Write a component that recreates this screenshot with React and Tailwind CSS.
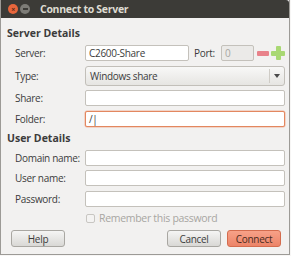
import React from 'react';

const Field = ({ label, className = '', children }) => (
  <div className={`flex items-center ${className}`}>
    <span className="w-[84px] pl-[14px] text-[#3c3c3c] shrink-0 whitespace-nowrap">{label}</span>
    {children}
  </div>
);

const Input = ({ value = '', focus, className = '' }) => (
  <div
    className={`h-[16px] rounded-[2px] border flex items-center px-[3px] ${
      focus ? 'border-[#e3875f] shadow-[0_0_0_0.5px_#f0b8a0]' : 'border-[#c4c1bb]'
    } ${className}`}
  >
    {value}
  </div>
);

const btn = 'w-[54px] h-[17px] rounded-[3px] border text-[10px] leading-none tracking-[-0.3px]';

export default function App() {
  return (
    <div
      className="w-[291px] h-[256px] bg-[#f7f6f5] text-[10px] leading-none tracking-[-0.3px]"
      style={{ fontFamily: '"Open Sans", "DejaVu Sans", sans-serif' }}
    >
      <div className="w-[290px] h-[255px] border border-[#9c9a96] border-t-0 flex flex-col bg-[#f2f1f0]">
        {/* title bar */}
        <div className="h-[18px] bg-[#3c3b37] flex items-center pl-[7px] shrink-0 rounded-tr-[3px]">
          <div className="w-[10px] h-[10px] rounded-full bg-[#e8663c] flex items-center justify-center text-[7px] text-[#5a2a18] font-bold">×</div>
          <div className="w-[10px] h-[10px] rounded-full bg-[#7d7c77] ml-[2px] flex items-center justify-center">
            <div className="w-[5px] h-[1.5px] bg-[#3c3b37]" />
          </div>
          <span className="ml-[10px] font-bold text-[#dfdbd2] text-[10.5px]">Connect to Server</span>
        </div>

        <div className="flex flex-col">
          <div className="font-bold text-[10.5px] tracking-normal text-[#3c3c3c] pl-[6px] mt-[9px] h-[12px] flex items-center">Server Details</div>

          <Field label="Server:" className="mt-[6px]">
            <Input value="C2600-Share" className="w-[104px] bg-white text-[#3c3c3c]" />
            <span className="ml-[5px] w-[27px] text-[#3c3c3c]">Port:</span>
            <Input value="0" className="w-[33px] bg-[#ebeae8] text-[#a8a6a2]" />
            <div className="ml-[3px] w-[12px] h-[5px] bg-[#e8828a] rounded-[1px]" />
            <div className="ml-[2px] w-[14px] h-[14px] relative">
              <div className="absolute left-[4.5px] top-0 w-[5px] h-[14px] bg-[#a9d873] rounded-[1px]" />
              <div className="absolute left-0 top-[4.5px] w-[14px] h-[5px] bg-[#a9d873] rounded-[1px]" />
            </div>
          </Field>
          <Field label="Type:" className="mt-[5px]">
            <div className="w-[200px] h-[20px] rounded-[3px] border border-[#c2bfb9] bg-gradient-to-b from-[#f8f8f7] to-[#e6e5e2] flex items-center">
              <span className="flex-1 pl-[4px] text-[#3c3c3c]">Windows share</span>
              <div className="w-[15px] h-[14px] border-l border-[#cfccc6] flex items-center justify-center">
                <svg width="6" height="4" viewBox="0 0 6 4"><path d="M0 0h6L3 4z" fill="#4a4a4a" /></svg>
              </div>
            </div>
          </Field>
          <Field label="Share:" className="mt-[4px]">
            <Input className="w-[200px] bg-white" />
          </Field>
          <Field label="Folder:" className="mt-[5px]">
            <Input value="/|" focus className="w-[200px] bg-white text-[#3c3c3c]" />
          </Field>

          <div className="font-bold text-[10.5px] tracking-normal text-[#3c3c3c] pl-[6px] mt-[5px] h-[12px] flex items-center">User Details</div>

          <Field label="Domain name:" className="mt-[6px]">
            <Input className="w-[200px] bg-white" />
          </Field>
          <Field label="User name:" className="mt-[4px]">
            <Input className="w-[200px] bg-white" />
          </Field>
          <Field label="Password:" className="mt-[5px]">
            <Input className="w-[200px] bg-white" />
          </Field>

          <div className="flex items-center pl-[85px] mt-[6px] h-[10px] text-[#a8a6a2]">
            <div className="w-[9px] h-[9px] border border-[#c8c6c2] rounded-[2px] bg-[#f4f3f2]" />
            <span className="ml-[4px] text-[10.5px]">Remember this password</span>
          </div>

          <div className="flex items-center mt-[7px] pl-[10px] pr-[8px]">
            <button className={`${btn} border-[#a9a7a2] bg-gradient-to-b from-[#f5f5f4] to-[#d9d8d5] text-[#3c3c3c]`}>Help</button>
            <div className="flex-1" />
            <button className={`${btn} border-[#a9a7a2] bg-gradient-to-b from-[#f5f5f4] to-[#d9d8d5] text-[#3c3c3c]`}>Cancel</button>
            <button className={`${btn} ml-[6px] border-[#d46c4e] bg-gradient-to-b from-[#f7a188] to-[#ec8468] text-[#4a2a20]`}>Connect</button>
          </div>
        </div>
      </div>
    </div>
  );
}
